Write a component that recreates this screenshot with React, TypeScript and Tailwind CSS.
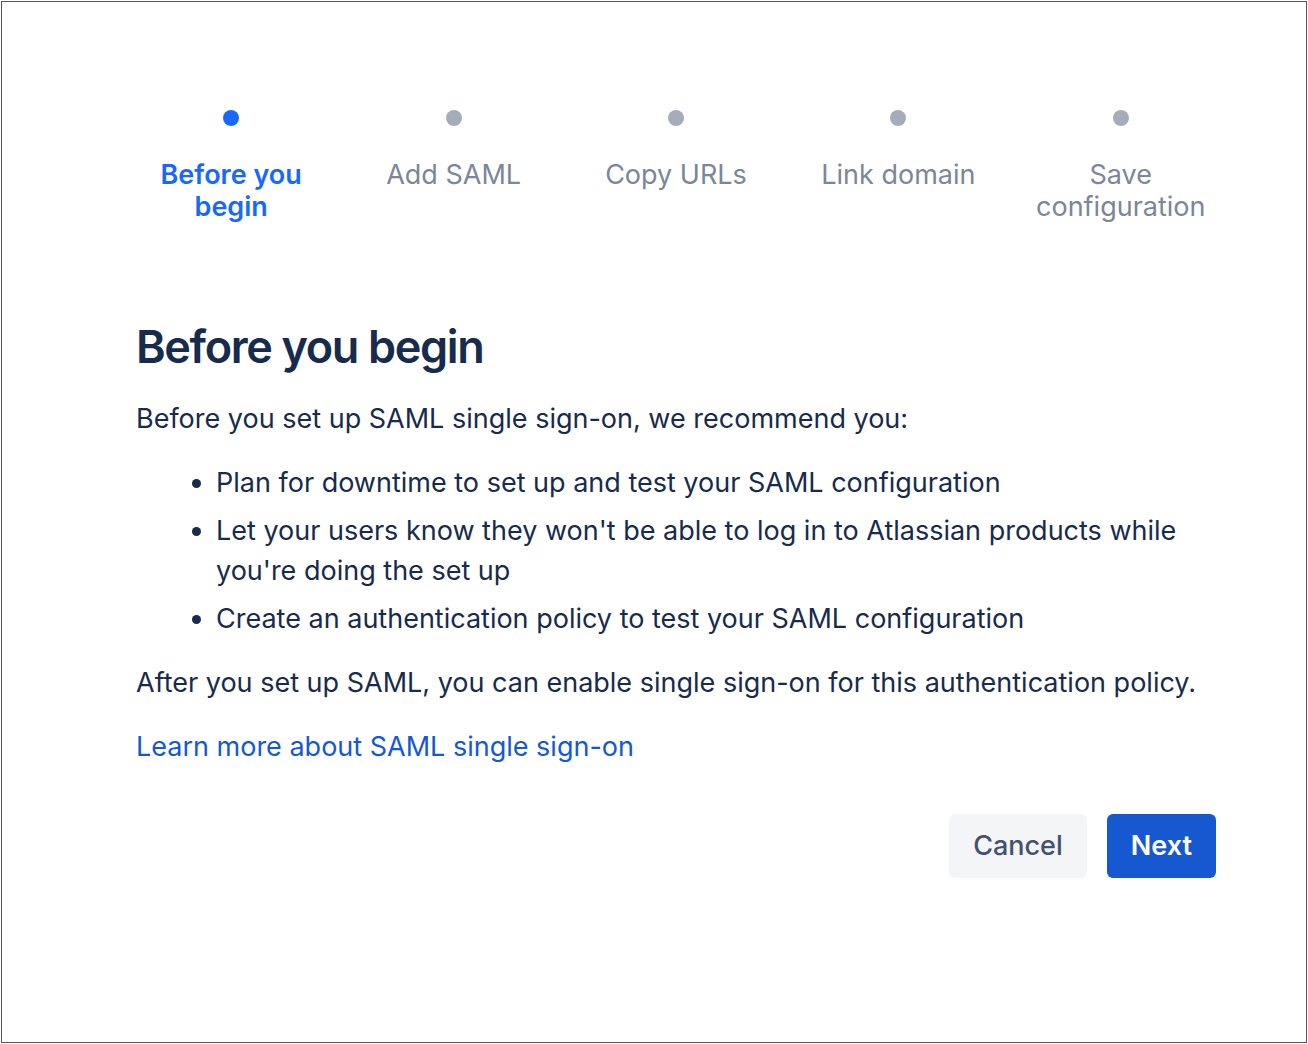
const steps = ["Before you begin", "Add SAML", "Copy URLs", "Link domain", "Save configuration"];

function Stepper() {
  return (
    <div className="grid grid-cols-5 w-[1112px] ml-[118px] mt-[108px]">
      {steps.map((s, i) => (
        <div key={s} className="flex flex-col items-center">
          <span
            className={
              i === 0
                ? "w-4 h-4 rounded-full bg-[#1868fb]"
                : "w-4 h-4 rounded-full bg-[#a5adba]"
            }
          />
          <span
            className={
              i === 0
                ? "mt-[33px] text-center text-[27px] leading-8 font-semibold text-[#1868fb] w-[170px]"
                : "mt-[33px] text-center text-[27px] leading-8 text-[#7a869a] w-[190px]"
            }
          >
            {s}
          </span>
        </div>
      ))}
    </div>
  );
}

export default function App() {
  return (
    <div className="p-px bg-white" style={{ fontFamily: "Inter, 'Noto Sans', sans-serif" }}>
      <div className="h-[1042px] border border-[#555] bg-white">
        <Stepper />
        <div className="ml-[134px] mr-[90px] mt-[96px] text-[#172b4d]">
          <h1 className="text-[45px] leading-[56px] font-semibold tracking-[-0.03em]">Before you begin</h1>
          <p className="mt-[24px] text-[27px] leading-10">
            Before you set up SAML single sign-on, we recommend you:
          </p>
          <ul className="mt-6 pl-[80px] list-disc text-[27px] leading-10 flex flex-col gap-2">
            <li>Plan for downtime to set up and test your SAML configuration</li>
            <li>Let your users know they won't be able to log in to Atlassian products while you're doing the set up</li>
            <li>Create an authentication policy to test your SAML configuration</li>
          </ul>
          <p className="mt-6 text-[27px] leading-10">
            After you set up SAML, you can enable single sign-on for this authentication policy.
          </p>
          <a href="#" className="block mt-6 text-[27px] leading-10 text-[#1558d6]">
            Learn more about SAML single sign-on
          </a>
          <div className="flex justify-end gap-5 mt-[47px]">
            <button className="h-16 px-6 rounded-md bg-[#f4f5f7] text-[#42526e] text-[27px] font-medium">Cancel</button>
            <button className="h-16 px-6 rounded-md bg-[#1558d0] text-white text-[27px] font-semibold">Next</button>
          </div>
        </div>
      </div>
    </div>
  );
}
